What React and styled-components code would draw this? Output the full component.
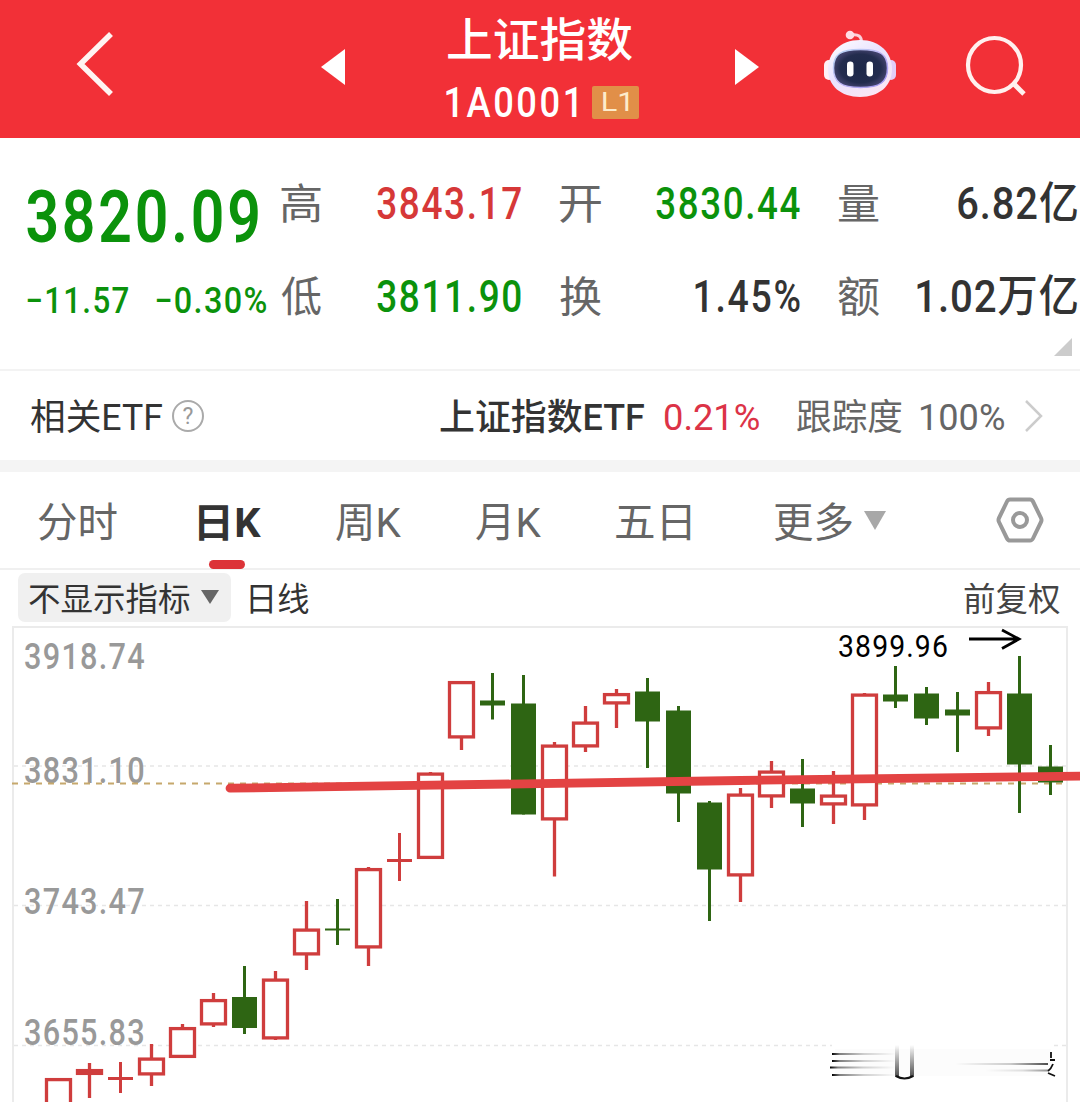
import React, { useLayoutEffect, useState } from 'react';
import styled, { createGlobalStyle } from 'styled-components';

const FONT = 'Roboto, "Noto Sans CJK SC", sans-serif';

const GlobalStyle = createGlobalStyle`
  * { box-sizing: border-box; }
  body { margin: 0; background: #fff; font-family: ${FONT}; }
`;

/* ---------- text fitted to a fixed ink width ---------- */
const FitBox = styled.span`
  display: block;
  flex: none;
  width: ${(p) => p.$w}px;
  height: ${(p) => p.$lh || p.$size}px;
  margin-left: ${(p) => p.$ml || 0}px;
  margin-top: ${(p) => p.$mt || 0}px;
  font-size: ${(p) => p.$size}px;
  font-weight: ${(p) => p.$weight || 400};
  line-height: ${(p) => p.$lh || p.$size}px;
  letter-spacing: ${(p) => p.$ls || 0}px;
  color: ${(p) => p.$color || '#333'};
  white-space: nowrap;
`;
const FitInner = styled.span`
  display: inline-block;
  transform-origin: 0 50%;
`;

function Fit({ children, w, size, weight = 400, color, ml, mt, lh, ls = 0 }) {
  const [transform, setTransform] = useState('none');
  useLayoutEffect(() => {
    const ctx = document.createElement('canvas').getContext('2d');
    ctx.font = `${weight} ${size}px ${FONT}`;
    const m = ctx.measureText(children);
    const left = m.actualBoundingBoxLeft;
    const ink = left + m.actualBoundingBoxRight + ls * (children.length - 1);
    setTransform(`scaleX(${w / ink}) translateX(${left}px)`);
  }, [children, w, size, weight, ls]);
  return (
    <FitBox $w={w} $size={size} $weight={weight} $color={color} $ml={ml} $mt={mt} $lh={lh} $ls={ls}>
      <FitInner style={{ transform }}>{children}</FitInner>
    </FitBox>
  );
}

const Page = styled.div`
  width: 1080px;
  height: 1102px;
  overflow: hidden;
  display: flex;
  flex-direction: column;
  background: #fff;
`;

const Icon = styled.svg`
  display: block;
  flex: none;
  margin-left: ${(p) => p.$ml || 0}px;
  margin-top: ${(p) => p.$mt || 0}px;
  overflow: visible;
`;

/* ---------- header ---------- */
const Header = styled.header`
  height: 138px;
  flex: none;
  display: flex;
  align-items: flex-start;
  background: #f23037;
`;
const TitleBlock = styled.div`
  width: 194px;
  margin-left: 101px;
  padding-top: 13px;
  display: flex;
  flex-direction: column;
`;
const CodeLine = styled.div`
  display: flex;
  align-items: center;
  height: 34px;
  margin-top: 18px;
`;
const Badge = styled.span`
  width: 47px;
  height: 33px;
  margin-left: 15px;
  display: flex;
  align-items: center;
  justify-content: center;
  border-radius: 2px;
  background: #e18f48;
`;

/* ---------- quote ---------- */
const Quote = styled.section`
  height: 233px;
  flex: none;
  display: grid;
  grid-template-columns: 281px 279px 278px 242px;
  border-bottom: 2px solid #f3f3f3;
  position: relative;
`;
const PriceCol = styled.div`
  padding: 42px 0 0 27px;
`;
const Changes = styled.div`
  display: flex;
  margin-top: 29px;
`;
const StatCol = styled.div`
  display: flex;
  flex-direction: column;
  gap: 49px;
  padding-top: 43px;
`;
const Stat = styled.div`
  display: flex;
  align-items: center;
  justify-content: space-between;
  height: 44px;
  width: ${(p) => p.$w}px;
`;
const Corner = styled.i`
  position: absolute;
  right: 8px;
  bottom: 13px;
  width: 18px;
  height: 18px;
  background: #ccc;
  clip-path: polygon(100% 0, 100% 100%, 0 100%);
`;

/* ---------- etf row ---------- */
const EtfRow = styled.section`
  height: 89px;
  flex: none;
  display: flex;
  align-items: center;
  padding-left: 31px;
`;
const Help = styled.span`
  width: 32px;
  height: 32px;
  margin-left: 10px;
  border: 2px solid #aaa;
  border-radius: 50%;
  font-size: 23px;
  line-height: 29px;
  text-align: center;
  color: #999;
`;
const Band = styled.div`
  height: 12px;
  flex: none;
  background: #f4f4f4;
`;

/* ---------- tabs ---------- */
const Tabs = styled.nav`
  height: 98px;
  flex: none;
  display: flex;
  align-items: flex-start;
  border-bottom: 2px solid #f0f0f0;
`;
const Tab = styled.div`
  display: flex;
  flex-direction: column;
  align-items: center;
  margin-left: ${(p) => p.$ml}px;
  padding-top: 28px;
`;
const Underline = styled.i`
  width: 36px;
  height: 9px;
  margin: 13px 0 0 -6px;
  border-radius: 5px;
  background: #dc3338;
`;
const Caret = styled.i`
  flex: none;
  width: ${(p) => p.$w}px;
  height: ${(p) => p.$h}px;
  margin-left: ${(p) => p.$ml}px;
  margin-top: ${(p) => p.$mt || 0}px;
  background: ${(p) => p.$color};
  clip-path: polygon(0 0, 100% 0, 50% 100%);
`;

/* ---------- indicator row ---------- */
const Indicators = styled.div`
  height: 55px;
  flex: none;
  display: flex;
  align-items: center;
  padding: 0 0 1px 18px;
`;
const Select = styled.div`
  width: 213px;
  height: 49px;
  display: flex;
  align-items: center;
  padding-left: 11px;
  border-radius: 7px;
  background: #f0f0f0;
`;

const Chart = styled.svg`
  display: block;
  flex: none;
  font-family: ${FONT};
`;

const GREEN = '#0b920b';
const RED = '#d63838';

// [kind, high, bodyTop, bodyBottom, low] in vertical chart units
const CANDLES = [
  ['up', 1078, 1078, 1120, 1120], ['up', 1063, 1069, 1075, 1098], ['cross', 1062, 1077, 1080, 1093],
  ['up', 1044, 1057.5, 1075.5, 1086], ['up', 1024, 1027, 1058, 1058], ['up', 993, 999, 1025.5, 1027],
  ['down', 966, 997, 1028, 1034], ['up', 971, 978.5, 1039.5, 1040], ['up', 901, 928.5, 955.5, 970],
  ['down', 899, 928.5, 930.5, 945], ['up', 867, 868, 948.5, 966], ['cross', 833, 859, 862, 881],
  ['up', 772, 772.5, 859, 859], ['up', 681, 681, 738.5, 750], ['down', 673, 700.5, 705.5, 719.5],
  ['down', 675, 703.5, 814.5, 814.5], ['up', 742, 744.5, 820.5, 876.5], ['up', 706, 721.5, 747.5, 752],
  ['up', 689, 693, 704.5, 728], ['down', 678, 691.5, 721.5, 768], ['down', 706, 710.5, 793.5, 822],
  ['down', 801, 802.5, 869.5, 921], ['up', 788, 793.5, 876.5, 902], ['up', 761, 770.5, 797.5, 808],
  ['down', 759, 788.5, 803.5, 827], ['up', 771, 794.5, 805.5, 824], ['up', 693, 693.5, 806.5, 820],
  ['down', 666, 694.5, 701.5, 708], ['down', 687, 693.5, 718.5, 725], ['down', 692, 709.5, 715.5, 752],
  ['up', 682, 691, 729.5, 736], ['down', 656, 693.5, 764.5, 813], ['down', 745, 766.5, 782.5, 795],
];

function Candle({ x, d }) {
  const [kind, hi, top, bot, lo] = d;
  const color = kind === 'down' ? '#2e6513' : '#cf3d3d';
  if (kind === 'up') {
    return (
      <g>
        <path d={`M${x} ${hi}V${lo}`} stroke={color} strokeWidth="3.3" />
        <rect x={x - 12} y={top + 1.6} width="24" height={bot - top - 3.2} fill="#fff" stroke={color} strokeWidth="3.3" />
      </g>
    );
  }
  return (
    <g>
      <path d={`M${x} ${hi}V${lo}`} stroke={color} strokeWidth="3" />
      <rect x={x - 12.5} y={top} width="25" height={bot - top} fill={color} />
    </g>
  );
}

const LABELS = [['3918.74', 669], ['3831.10', 783], ['3743.47', 914], ['3655.83', 1045]];

function KChart() {
  return (
    <Chart width="1080" height="477" viewBox="0 625 1080 477">
      <defs>
        <linearGradient id="fadeR"><stop offset="0" stopColor="#000" /><stop offset=".12" stopColor="#000" stopOpacity=".5" /><stop offset=".5" stopColor="#000" stopOpacity=".18" /><stop offset="1" stopColor="#000" stopOpacity="0" /></linearGradient>
        <linearGradient id="fadeL"><stop offset="0" stopColor="#000" stopOpacity="0" /><stop offset=".6" stopColor="#000" stopOpacity=".2" /><stop offset="1" stopColor="#000" stopOpacity=".7" /></linearGradient>
        <linearGradient id="fadeD" x1="0" y1="0" x2="0" y2="1"><stop offset="0" stopColor="#222" stopOpacity="0" /><stop offset="1" stopColor="#222" stopOpacity=".8" /></linearGradient>
      </defs>
      <path d="M13 1102V627H1067V1102" fill="none" stroke="#ebebeb" strokeWidth="2" />
      {[766, 905.5, 1045.5].map((y) => (
        <path key={y} d={`M14 ${y}H1066`} stroke="#e6e6e6" strokeWidth="1.5" strokeDasharray="4 4" />
      ))}
      {LABELS.map(([t, y]) => (
        <text key={t} x="24" y={y} fontSize="36" fontWeight="500" fill="#999" letterSpacing="1.5" textLength="122" lengthAdjust="spacingAndGlyphs">{t}</text>
      ))}
      <path d="M12 783.5H1066" stroke="#c6a86c" strokeWidth="1.8" strokeDasharray="6 6" />
      {CANDLES.map((d, i) => <Candle key={i} x={58.5 + i * 31} d={d} />)}
      <path d="M230 788.2L400 785.7L740 780.5L1086 776" fill="none" stroke="#e34343" strokeWidth="8.8" strokeLinecap="round" strokeLinejoin="round" />
      <text x="838" y="657" fontSize="30.5" fill="#000" letterSpacing="1.2" textLength="111" lengthAdjust="spacingAndGlyphs">3899.96</text>
      <path d="M969 639H1019M1002 630L1019 639L1002 648.5" fill="none" stroke="#000" strokeWidth="2.8" />

      <rect x="832" y="1043" width="220" height="36" fill="#fff" />
      <rect x="835" y="1049" width="216" height="27" fill="#000" opacity=".012" />
      <rect x="832" y="1053" width="64" height="2" fill="url(#fadeR)" />
      <rect x="832" y="1060" width="64" height="2" fill="url(#fadeR)" />
      <rect x="830" y="1066.5" width="66" height="2" fill="url(#fadeR)" />
      <rect x="832" y="1074" width="64" height="2" fill="url(#fadeR)" />
      <rect x="895" y="1045" width="4" height="32" fill="url(#fadeD)" />
      <rect x="910" y="1045" width="4" height="32" fill="url(#fadeD)" />
      <path d="M896 1076Q904.5 1081 913 1076" fill="none" stroke="#111" strokeWidth="2.2" />
      <rect x="955" y="1063" width="93" height="2" fill="url(#fadeL)" />
      <rect x="985" y="1069.5" width="63" height="2" fill="url(#fadeL)" opacity=".6" />
      <path d="M1051 1052V1058M1050 1060H1055M1053 1064Q1051 1069 1048 1071M1048 1073L1055 1076" fill="none" stroke="#111" strokeWidth="1.8" />
    </Chart>
  );
}

const Robot = () => (
  <Icon width="72" height="68" viewBox="0 0 72 68" $ml={65} $mt={30}>
    <defs>
      <linearGradient id="shell" x1="0" y1="0" x2=".7" y2="1">
        <stop offset="0" stopColor="#ffffff" /><stop offset=".5" stopColor="#e9e2ff" /><stop offset="1" stopColor="#fbe6f4" />
      </linearGradient>
      <radialGradient id="face"><stop offset="0" stopColor="#1d2849" /><stop offset=".75" stopColor="#232c4e" /><stop offset="1" stopColor="#3f406a" /></radialGradient>
      <linearGradient id="rim" x1="0" y1="0" x2="1" y2="1"><stop offset="0" stopColor="#b5d6f3" /><stop offset=".5" stopColor="#c0b6f5" /><stop offset="1" stopColor="#9a90ee" /></linearGradient>
    </defs>
    <path d="M27 5Q38 3 37.500 13" fill="none" stroke="#fbd0da" strokeWidth="3" />
    <circle cx="26" cy="5" r="4.300" fill="#ffdce4" />
    <rect x="0" y="30" width="10" height="20" rx="5" fill="#fff0f6" />
    <rect x="62" y="30" width="10" height="20" rx="5" fill="#e2cdf8" />
    <path d="M36 10C56 10 68 23 68 39C68 56 55 67 36 67C17 67 4 56 4 39C4 23 16 10 36 10Z" fill="url(#shell)" />
    <path d="M36.500 19.500C56 19.500 63.500 24 63.500 38C63.500 52 56 57.500 36.500 57.500C17 57.500 9.500 52 9.500 38C9.500 24 17 19.500 36.500 19.500Z" fill="url(#face)" stroke="url(#rim)" strokeWidth="1.500" />
    <rect x="23" y="31.500" width="6.500" height="15" rx="3.200" fill="#fff" />
    <rect x="42.500" y="31.500" width="6.500" height="15" rx="3.200" fill="#fff" />
  </Icon>
);

export default function App() {
  return (
    <Page>
      <GlobalStyle />
      <Header>
        <Icon width="36" height="66" viewBox="0 0 36 66" $ml={77} $mt={31}>
          <path d="M34 3L3.500 33L34 63" fill="none" stroke="#fff4f2" strokeWidth="5.6" />
        </Icon>
        <Icon width="24" height="36" viewBox="0 0 24 36" $ml={208} $mt={49}>
          <path d="M24 0V36L0 18Z" fill="#fff" />
        </Icon>
        <TitleBlock>
          <Fit w={184} size={46} weight={500} color="#fff" lh={54} ml={2}>上证指数</Fit>
          <CodeLine>
            <Fit w={131} size={43} weight={500} color="#fff" lh={37} ls={3}>1A0001</Fit>
            <Badge><Fit w={26} size={26} color="#fdeccb" lh={35}>L1</Fit></Badge>
          </CodeLine>
        </TitleBlock>
        <Icon width="24" height="36" viewBox="0 0 24 36" $ml={95} $mt={49}>
          <path d="M0 0V36L24 18Z" fill="#fff" />
        </Icon>
        <Robot />
        <Icon width="60" height="60" viewBox="0 0 60 60" $ml={70} $mt={36}>
          <ellipse cx="28.500" cy="29" rx="26.500" ry="27" fill="none" stroke="#fff0ee" strokeWidth="4.200" />
          <path d="M47 47L58 58" stroke="#fff0ee" strokeWidth="4.800" />
        </Icon>
      </Header>

      <Quote>
        <PriceCol>
          <Fit w={231} size={73} weight={600} color={GREEN} lh={74} ls={3.5}>3820.09</Fit>
          <Changes>
            <Fit w={101} size={36} weight={500} color={GREEN} lh={36} ls={1.5}>−11.57</Fit>
            <Fit w={110} size={36} weight={500} color={GREEN} lh={36} ml={28} ls={1.5}>−0.30%</Fit>
          </Changes>
        </PriceCol>
        <StatCol>
          <Stat $w={240}><Fit w={40} size={42} mt={4} color="#666">高</Fit><Fit w={144} size={45} ls={2} weight={500} color={RED}>3843.17</Fit></Stat>
          <Stat $w={240}><Fit w={40} size={42} mt={4} color="#666">低</Fit><Fit w={144} size={45} ls={2} weight={500} color={GREEN}>3811.90</Fit></Stat>
        </StatCol>
        <StatCol>
          <Stat $w={240}><Fit w={41} size={42} mt={4} color="#666">开</Fit><Fit w={144} size={45} ls={2} weight={500} color={GREEN}>3830.44</Fit></Stat>
          <Stat $w={240}><Fit w={41} size={42} mt={4} color="#666">换</Fit><Fit w={105} size={45} ls={2} weight={500}>1.45%</Fit></Stat>
        </StatCol>
        <StatCol>
          <Stat $w={239}><Fit w={41} size={42} mt={4} color="#666">量</Fit><Fit w={119} size={44} mt={2} ls={1} weight={500}>6.82亿</Fit></Stat>
          <Stat $w={239}><Fit w={41} size={42} mt={4} color="#666">额</Fit><Fit w={160} size={44} mt={2} ls={1} weight={500}>1.02万亿</Fit></Stat>
        </StatCol>
        <Corner />
      </Quote>

      <EtfRow>
        <Fit w={131} size={36} mt={4}>相关ETF</Fit>
        <Help>?</Help>
        <Fit w={204} size={36} mt={4} weight={500} ml={236}>上证指数ETF</Fit>
        <Fit w={94} size={36} mt={4} color="#dc3347" ml={21}>0.21%</Fit>
        <Fit w={105} size={36} mt={5} color="#666" ml={38}>跟踪度</Fit>
        <Fit w={83} size={36} mt={4} color="#666" ml={19}>100%</Fit>
        <Icon width="18" height="32" viewBox="0 0 18 32" $ml={21}>
          <path d="M1 1L16 16L1 31" fill="none" stroke="#ccc" strokeWidth="2.500" />
        </Icon>
      </EtfRow>
      <Band />

      <Tabs>
        <Tab $ml={38}><Fit w={79} size={41} lh={47} color="#666">分时</Fit></Tab>
        <Tab $ml={82}><Fit w={62} size={40} lh={47} weight={700}>日K</Fit><Underline /></Tab>
        <Tab $ml={75}><Fit w={65} size={41} lh={47} color="#666">周K</Fit></Tab>
        <Tab $ml={75}><Fit w={65} size={41} lh={47} color="#666">月K</Fit></Tab>
        <Tab $ml={75}><Fit w={75} size={41} lh={47} color="#666">五日</Fit></Tab>
        <Tab $ml={83}><Fit w={78} size={41} lh={47} color="#666">更多</Fit></Tab>
        <Caret $w={22} $h={19} $ml={12} $mt={39} $color="#a8a8a8" />
        <Icon width="48" height="46" viewBox="0 0 48 46" $ml={110} $mt={25}>
          <path d="M14 2.500H34Q36 2.500 37 4.500L45 21Q46 23 45 25L37 41.500Q36 43.500 34 43.500H14Q12 43.500 11 41.500L3 25Q2 23 3 21L11 4.500Q12 2.500 14 2.500Z" fill="none" stroke="#999" strokeWidth="4" />
          <circle cx="24" cy="23" r="7" fill="none" stroke="#999" strokeWidth="4" />
        </Icon>
      </Tabs>

      <Indicators>
        <Select>
          <Fit w={161} size={32.5} mt={6}>不显示指标</Fit>
          <Caret $w={18} $h={14} $ml={11} $color="#666" />
        </Select>
        <Fit w={59} size={32.5} ml={19} mt={6}>日线</Fit>
        <Fit w={96} size={32.5} ml={655} mt={6} color="#444">前复权</Fit>
      </Indicators>

      <KChart />
    </Page>
  );
}
